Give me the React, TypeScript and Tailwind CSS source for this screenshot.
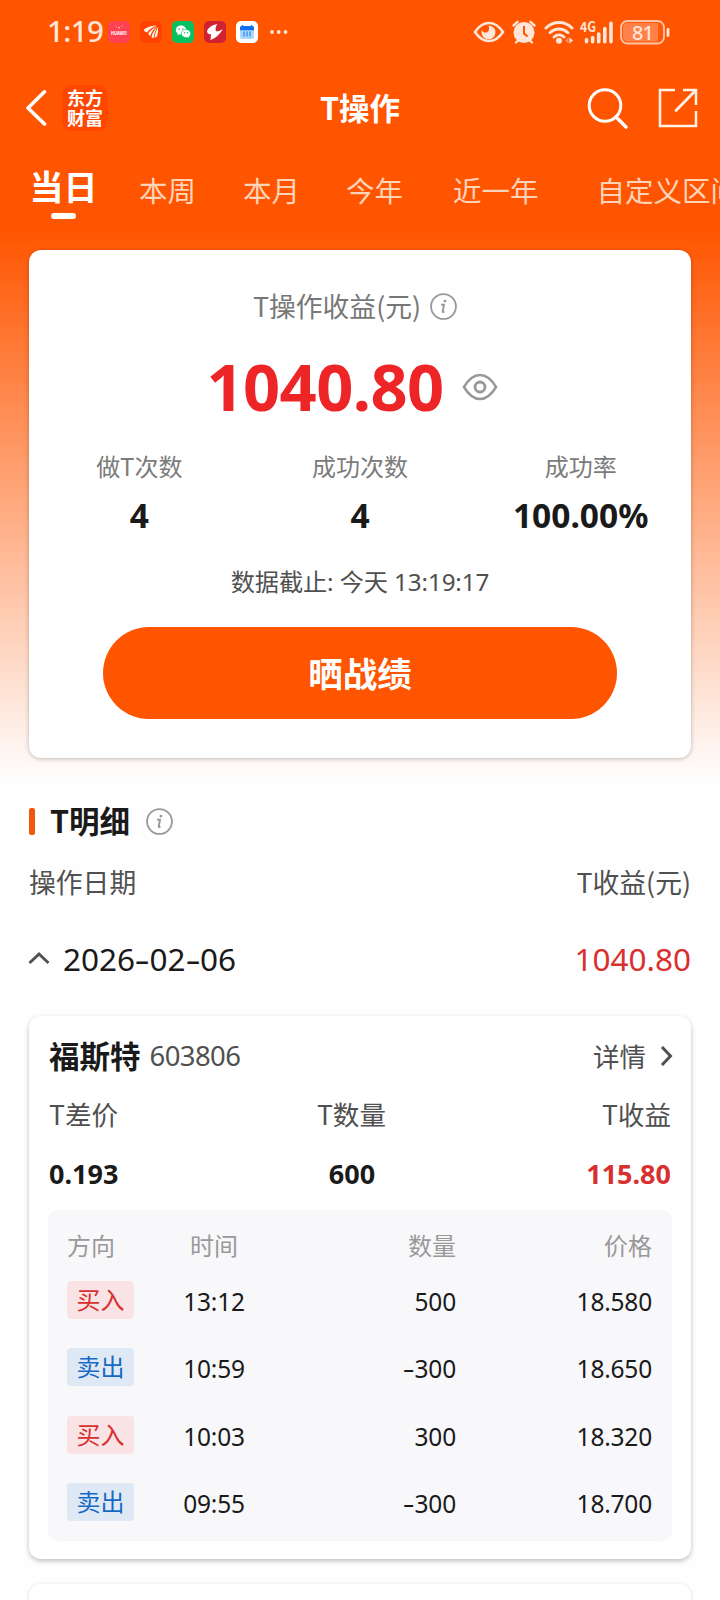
import { clsx } from 'clsx';

interface Trade {
  side: 'buy' | 'sell';
  time: string;
  amount: string;
  price: string;
}

const tabs = [
  { label: '本周', className: 'ml-[42px]' },
  { label: '本月', className: 'ml-[47px]' },
  { label: '今年', className: 'ml-[46px]' },
  { label: '近一年', className: 'ml-[50px]' },
  { label: '自定义区间', className: 'ml-[58px]' },
];

const stats = [
  { label: '做T次数', value: '4' },
  { label: '成功次数', value: '4' },
  { label: '成功率', value: '100.00%' },
];

const trades: Trade[] = [
  { side: 'buy', time: '13:12', amount: '500', price: '18.580' },
  { side: 'sell', time: '10:59', amount: '-300', price: '18.650' },
  { side: 'buy', time: '10:03', amount: '300', price: '18.320' },
  { side: 'sell', time: '09:55', amount: '-300', price: '18.700' },
];

const numeric = "font-['Noto_Sans','Noto_Sans_CJK_SC',sans-serif]";

// Digits with hyphens drawn nearly as wide as a figure
function Figures({ value }: { value: string }) {
  return (
    <>
      {value.split(/(-)/).map((part, i) =>
        part === '-' ? (
          <span key={i} className="inline-block w-[0.46em] scale-x-[1.5] text-center">-</span>
        ) : (
          part
        ),
      )}
    </>
  );
}

function InfoIcon() {
  return (
    <svg width="27" height="27" viewBox="0 0 28 28" fill="none" className="shrink-0">
      <circle cx="14" cy="14" r="12.9" stroke="#999" strokeWidth="1.900" />
      <circle cx="15.500" cy="8.400" r="1.500" fill="#999" />
      <path d="M11.500 12.200h3l-1.300 7c-.1.7.6.8 1.800.2" stroke="#999" strokeWidth="2" />
    </svg>
  );
}

function StatusBar() {
  return (
    <div className="flex h-16 items-center pl-[47px] pr-[50px] text-[#ffe6d8]">
      <span className={clsx('w-[61px] -translate-y-px text-[29.5px] font-medium leading-none tracking-[-0.6px]', numeric)}>1:19</span>

      {/* Notification icons */}
      <div className="flex items-center gap-[10px]">
        <svg width="22" height="22" viewBox="0 0 22 22">
          <rect width="22" height="22" rx="5" fill="#ff4151" />
          <path d="M7.500 4.500l1 1M10 6.800h2M14.500 4.500l-1 1" stroke="#fff" strokeWidth=".8" fill="none" />
          <text x="11" y="14" fontSize="4.200" fontWeight="700" textAnchor="middle" textLength="16" fill="#fff">HUAWEI</text>
        </svg>
        <svg width="22" height="22" viewBox="0 0 22 22">
          <rect width="22" height="22" rx="5" fill="#ff4200" />
          <path d="M4 8.300C7.500 6 12 4.700 16.500 4.300 12 6.500 9 9 7 11.500 5 11.300 4 10 4 8.300z" fill="#fff1e5" />
          <path d="M16.800 4.800c-4 2.700-6.700 5.200-8.800 8l2.300 2.500c1-3.800 3.300-7.300 6.500-10.500z" fill="#fff1e5" />
          <path d="M17.200 5.500c-3.200 3.700-5 7.300-5.700 11.300l2 .2c.7-4 1.900-7.800 3.700-11.500z" fill="#fff1e5" />
          <path d="M17.900 6c-1.700 3.500-2.800 7-3.400 10.800 1-.2 1.900-.7 2.500-1.300.9-3 1.200-6 .9-9.500z" fill="#fff1e5" />
        </svg>
        <svg width="22" height="22" viewBox="0 0 22 22">
          <rect width="22" height="22" rx="5" fill="#07c160" />
          <path d="M9 4.500c-3 0-5.200 2-5.200 4.500 0 1.500.8 2.700 2 3.500l-.5 1.700 2-1c.6.2 1.200.2 1.700.2 3 0 5.200-2 5.200-4.400S12 4.500 9 4.500z" fill="#fff" />
          <path d="M14 8.600c-2.600 0-4.700 1.700-4.700 4s2.100 4 4.700 4c.6 0 1.100 0 1.600-.2l1.700.9-.4-1.500c1.100-.7 1.800-1.900 1.800-3.200 0-2.300-2.100-4-4.700-4z" fill="#fff" stroke="#07c160" strokeWidth=".6" />
          <g fill="#07c160">
            <circle cx="7.300" cy="8" r=".8" />
            <circle cx="10.700" cy="8" r=".8" />
            <circle cx="12.500" cy="11.700" r=".7" />
            <circle cx="15.500" cy="11.700" r=".7" />
          </g>
        </svg>
        <svg width="22" height="22" viewBox="0 0 22 22">
          <rect width="22" height="22" rx="5" fill="#d02231" />
          <path d="M13.500 3C8 4 4 7 3 10c0 2.500 1.800 3.500 4 3L6.500 19c5-1.500 9.500-6 12.500-11-2.500 1.500-5 2.500-7 2.300-1-2.300-.3-5 1.500-7.300z" fill="#fff" />
        </svg>
        <svg width="22" height="22" viewBox="0 0 22 22">
          <rect width="22" height="22" rx="5" fill="#fff" />
          <rect x="4" y="5" width="14" height="13" rx="2" fill="#a9d8fb" />
          <path d="M4 9.300V6.500A1.500 1.500 0 0 1 5.500 5h11A1.500 1.500 0 0 1 18 6.500v2.800z" fill="#1470ea" />
          <path d="M6.500 4v2M15.500 4v2" stroke="#1470ea" strokeWidth="1.200" />
          <path d="M8 10.500v5M11 10.500v5M14 10.500v5" stroke="#4f9df0" strokeWidth="1.700" />
        </svg>
      </div>
      <svg width="20" height="6" viewBox="0 0 20 6" className="ml-[11px]" fill="currentColor">
        <circle cx="3" cy="3" r="1.900" />
        <circle cx="9.800" cy="3" r="1.900" />
        <circle cx="16.600" cy="3" r="1.900" />
      </svg>

      <div className="ml-auto flex items-center">
        {/* Eye comfort */}
        <svg width="32" height="22" viewBox="0 0 32 22" fill="none">
          <path d="M2 11C6 5 10.500 2 16 2s10 3 14 9c-4 6-8.500 9-14 9S6 17 2 11z" stroke="currentColor" strokeWidth="2.600" />
          <path d="M15.500 4.500c4 .4 7 3 7 6.700a7 7 0 0 1-14 .3c0-1 .2-1.800.6-2.600.6 2.100 2.300 3.100 4.100 2.700 2.700-.6 3.600-3.700 2.300-7.100z" fill="currentColor" />
        </svg>
        {/* Alarm */}
        <svg width="26" height="24" viewBox="0 0 26 24" fill="none" className="ml-[6px]">
          <circle cx="13" cy="12.500" r="10.500" fill="currentColor" />
          <path d="M2.500 5.500l4-3.700M23.500 5.500l-4-3.700M5 22.500l3-3M21 22.500l-3-3" stroke="currentColor" strokeWidth="2.400" strokeLinecap="round" />
          <path d="M13 6v7.500l3.500 3" stroke="#ff5500" strokeWidth="2" />
        </svg>
        {/* Wi-Fi */}
        <svg width="30" height="24" viewBox="0 0 30 24" fill="none" className="ml-[7px]">
          <path d="M2 8C9.500.8 20.500.8 28 8" stroke="currentColor" strokeWidth="3" strokeLinecap="round" />
          <path d="M6 12.800c5.500-5 12.500-5 18 0M10 17c3-2.700 7-2.700 10 0" stroke="currentColor" strokeWidth="2.900" strokeLinecap="round" />
          <circle cx="15" cy="20.700" r="3" fill="currentColor" />
          <path d="M24.500 17.500v6L21 20.500z" fill="#ff8f5c" />
          <path d="M25.500 17.500v6l3.500-3z" fill="currentColor" />
        </svg>
        {/* Signal */}
        <svg width="34" height="24" viewBox="0 0 34 24" fill="none" className="ml-[6px] overflow-visible">
          <text x="0" y="12" fontSize="14" fontWeight="700" textLength="16" lengthAdjust="spacingAndGlyphs" fill="currentColor">4G</text>
          <path d="M6.500 19.500v2.300M12.600 17.500v4.300M18.700 14v7.800M24.800 8.500v13.300M31 3.200v18.600" stroke="currentColor" strokeWidth="3.600" strokeLinecap="round" />
        </svg>
        {/* Battery */}
        <svg width="50" height="26" viewBox="0 0 50 26" fill="none" className={clsx('ml-[6px] overflow-visible', numeric)}>
          <rect x="1" y="2" width="43" height="22.500" rx="6.500" fill="#ff5a0a" stroke="#ffc3a3" strokeWidth="1.900" />
          <path d="M38 4H8.500Q3 4 3 9v8.500q0 5 5.500 5H38z" fill="#ff8149" />
          <path d="M48 10.500v6" stroke="currentColor" strokeWidth="2.800" strokeLinecap="round" />
          <text x="22.500" y="20.500" fontSize="20" fontWeight="500" textAnchor="middle" letterSpacing="-1" fill="currentColor">81</text>
        </svg>
      </div>
    </div>
  );
}

function NavBar() {
  return (
    <div className="grid h-[88px] grid-cols-3 items-center pl-[25px] pr-[22px] text-white">
      <div className="flex items-center">
        <svg width="22" height="36" viewBox="0 0 22 36" fill="none">
          <path d="M19.500 1.800L3 18l16.500 16" stroke="#fff" strokeWidth="3.600" strokeLinecap="round" strokeLinejoin="round" />
        </svg>
        <div className="ml-[15px] h-[46px] w-[46px] rounded-[9px] bg-[#ff4700] px-[5px] pt-[2px] text-center text-[18px] font-bold leading-[20px]">
          东方财富
        </div>
      </div>
      <h1 className="-translate-y-[1px] pr-[3px] text-center text-[30.5px] font-bold leading-none">T操作</h1>
      <div className="flex items-center justify-end gap-[30px]">
        <svg width="41" height="41" viewBox="0 0 41 41" fill="none" stroke="#fff">
          <circle cx="18" cy="17.500" r="15.800" strokeWidth="3" />
          <path d="M29 29l10 10" strokeWidth="3.400" strokeLinecap="round" />
        </svg>
        <svg width="40" height="40" viewBox="0 0 40 40" fill="none" stroke="#fff2e4" strokeWidth="2.500">
          <path d="M17 2H2v36h36V23" />
          <path d="M25 2h13v15" />
          <path d="M37.500 2.500L18 22.500" strokeWidth="2.800" strokeLinecap="round" />
        </svg>
      </div>
    </div>
  );
}

function Tabs() {
  return (
    <div className="flex h-[98px] items-start overflow-hidden whitespace-nowrap pl-[30px]">
      <div className="flex w-[67px] shrink-0 flex-col items-center pt-[17px] text-white">
        <span className="text-[34px] font-bold leading-[34px]">当日</span>
        <span className="mt-[10px] h-[6px] w-[25px] rounded-full bg-white" />
      </div>
      {tabs.map(tab => (
        <span key={tab.label} className={clsx('shrink-0 pt-[22px] text-[28.5px] leading-[32px] text-[#ffd3b8]', tab.className)}>
          {tab.label}
        </span>
      ))}
    </div>
  );
}

function SummaryCard() {
  return (
    <section className="mx-[29px] h-[508px] rounded-xl bg-white shadow-[0_1px_4px_rgba(0,0,0,0.25)]">
      <div className="flex items-center justify-center pr-[10px] pt-[42px]">
        <span className="text-[26.8px] leading-[28px] text-[#777]">T操作收益(元)</span>
        <span className="ml-[9px]"><InfoIcon /></span>
      </div>
      <div className="mt-[35px] flex h-[64px] items-center justify-center pr-[16px]">
        <span className={clsx('-translate-y-[1px] text-[65px] font-bold leading-none tracking-[-0.6px] text-[#ee2526]', numeric)}>1040.80</span>
        <svg width="36" height="28" viewBox="0 0 36 28" fill="none" stroke="#999" strokeWidth="2.500" className="ml-[18px]">
          <path d="M2 14C7 5.500 12 2 18 2s11 3.500 16 12c-5 8.500-10 12-16 12S7 22.500 2 14z" />
          <circle cx="18" cy="14" r="5" strokeWidth="2.800" />
        </svg>
      </div>

      <div className="mt-[35px] grid grid-cols-3 text-center">
        {stats.map(stat => (
          <div key={stat.label}>
            <div className="text-[24px] leading-[24px] text-[#7b7b7b]">{stat.label}</div>
            <div className={clsx('mt-[21px] text-[33.5px] font-bold leading-[32px] text-[#1a1a1a]', numeric)}>{stat.value}</div>
          </div>
        ))}
      </div>

      <p className={clsx('mt-[39px] text-center text-[24.2px] leading-[24px] tracking-[-0.1px] text-[#505050]', numeric)}>
        数据截止: 今天 13:19:17
      </p>
      <button className="mx-auto mt-[33px] block h-[92px] w-[514px] rounded-full bg-[#ff5500] pb-[1px] text-[34.5px] font-bold leading-none text-white">
        晒战绩
      </button>
    </section>
  );
}

function TradeRow({ trade }: { trade: Trade }) {
  const buy = trade.side === 'buy';

  return (
    <div className="flex h-[67.3px] items-start text-[24px] text-[#1a1a1a]">
      <span
        className={clsx(
          'h-[38px] w-[67px] rounded-[4px] text-center leading-[36px]',
          buy ? 'bg-[#f9e3e4] text-[#d8302f]' : 'bg-[#dfe9f6] text-[#1769c4]',
        )}
      >
        {buy ? '买入' : '卖出'}
      </span>
      <div className={clsx('flex flex-1 pt-px text-[24.5px] leading-[40px] tracking-[-0.2px]', numeric)}>
        <span className="ml-[40px] w-[80px] text-center">{trade.time}</span>
        <span className="w-[202px] text-right">
          <Figures value={trade.amount} />
        </span>
        <span className="flex-1 text-right">{trade.price}</span>
      </div>
    </div>
  );
}

function StockCard() {
  return (
    <section className="mx-[29px] mt-[42px] h-[543px] rounded-xl bg-white px-[20px] pt-[24px] shadow-[0_2px_5px_rgba(0,0,0,0.25)]">
      <div className="flex h-[32px] items-center">
        <span className="-translate-y-[1px] text-[30.5px] font-bold leading-none text-[#1a1a1a]">福斯特</span>
        <span className={clsx('ml-[9px] text-[27.5px] leading-none tracking-[-0.6px] text-[#505050]', numeric)}>603806</span>
        <span className="ml-auto text-[26.5px] leading-none text-[#505050]">详情</span>
        <svg width="14" height="22" viewBox="0 0 14 22" fill="none" className="ml-[14px] -mr-[3px]">
          <path d="M2 2l8.500 9L2 20" stroke="#505050" strokeWidth="3" />
        </svg>
      </div>

      <div className="mt-[28px] grid grid-cols-[182px_1fr_182px] text-[26.6px] leading-[28px] text-[#505050]">
        <span>T差价</span>
        <span className="pr-[17px] text-center">T数量</span>
        <span className="text-right">T收益</span>
      </div>
      <div className={clsx('mt-[32px] grid grid-cols-[182px_1fr_182px] text-[27px] font-bold leading-[28px] text-[#1a1a1a]', numeric)}>
        <span>0.193</span>
        <span className="pr-[16px] text-center">600</span>
        <span className="text-right text-[#d8302f]">115.80</span>
      </div>

      <div className="-mx-px mt-[22px] h-[331px] rounded-[10px] bg-[#f8f8fa] pl-[19px] pr-[20px] pt-[22px]">
        <div className="flex h-[49px] text-[24px] leading-[26px] text-[#999]">
          <span className="w-[67px]">方向</span>
          <span className="ml-[40px] w-[80px] text-center">时间</span>
          <span className="w-[202px] text-right">数量</span>
          <span className="flex-1 text-right">价格</span>
        </div>
        {trades.map(trade => (
          <TradeRow key={trade.time} trade={trade} />
        ))}
      </div>
    </section>
  );
}

export default function App() {
  return (
    <div className="h-[1600px] w-[720px] overflow-hidden bg-[#fefefe] bg-[linear-gradient(180deg,#ff5500_0px,#ff5500_230px,#fefefe_780px)] font-['Noto_Sans_CJK_SC',sans-serif]">
      <StatusBar />
      <NavBar />
      <Tabs />
      <SummaryCard />

      {/* Details */}
      <div className="mx-[29px] mt-[49px] flex h-[28px] items-center">
        <span className="h-[27px] w-[6px] rounded-[2px] bg-[#f0580f]" />
        <h2 className="ml-[15px] -translate-y-[1px] text-[30.5px] font-bold leading-none text-[#1a1a1a]">T明细</h2>
        <span className="ml-[16px]"><InfoIcon /></span>
      </div>
      <div className="mx-[29px] mt-[33px] flex justify-between text-[26.8px] leading-[28px] text-[#505050]">
        <span>操作日期</span>
        <span>T收益(元)</span>
      </div>
      <div className="mx-[29px] mt-[46px] flex h-[32px] items-center text-[31.5px] leading-none">
        <svg width="22" height="14" viewBox="0 0 22 14" fill="none" className="-ml-px">
          <path d="M1.500 12L11 3l9.500 9" stroke="#505050" strokeWidth="2.900" />
        </svg>
        <span className={clsx('ml-[13px] translate-y-px text-[#1a1a1a]', numeric)}>
          <Figures value="2026-02-06" />
        </span>
        <span className={clsx('ml-auto translate-y-px text-[#d8302f]', numeric)}>1040.80</span>
      </div>

      <StockCard />
      <div className="mx-[29px] mt-[25px] h-[60px] rounded-xl bg-white shadow-[0_1px_4px_rgba(0,0,0,0.15)]" />
    </div>
  );
}
